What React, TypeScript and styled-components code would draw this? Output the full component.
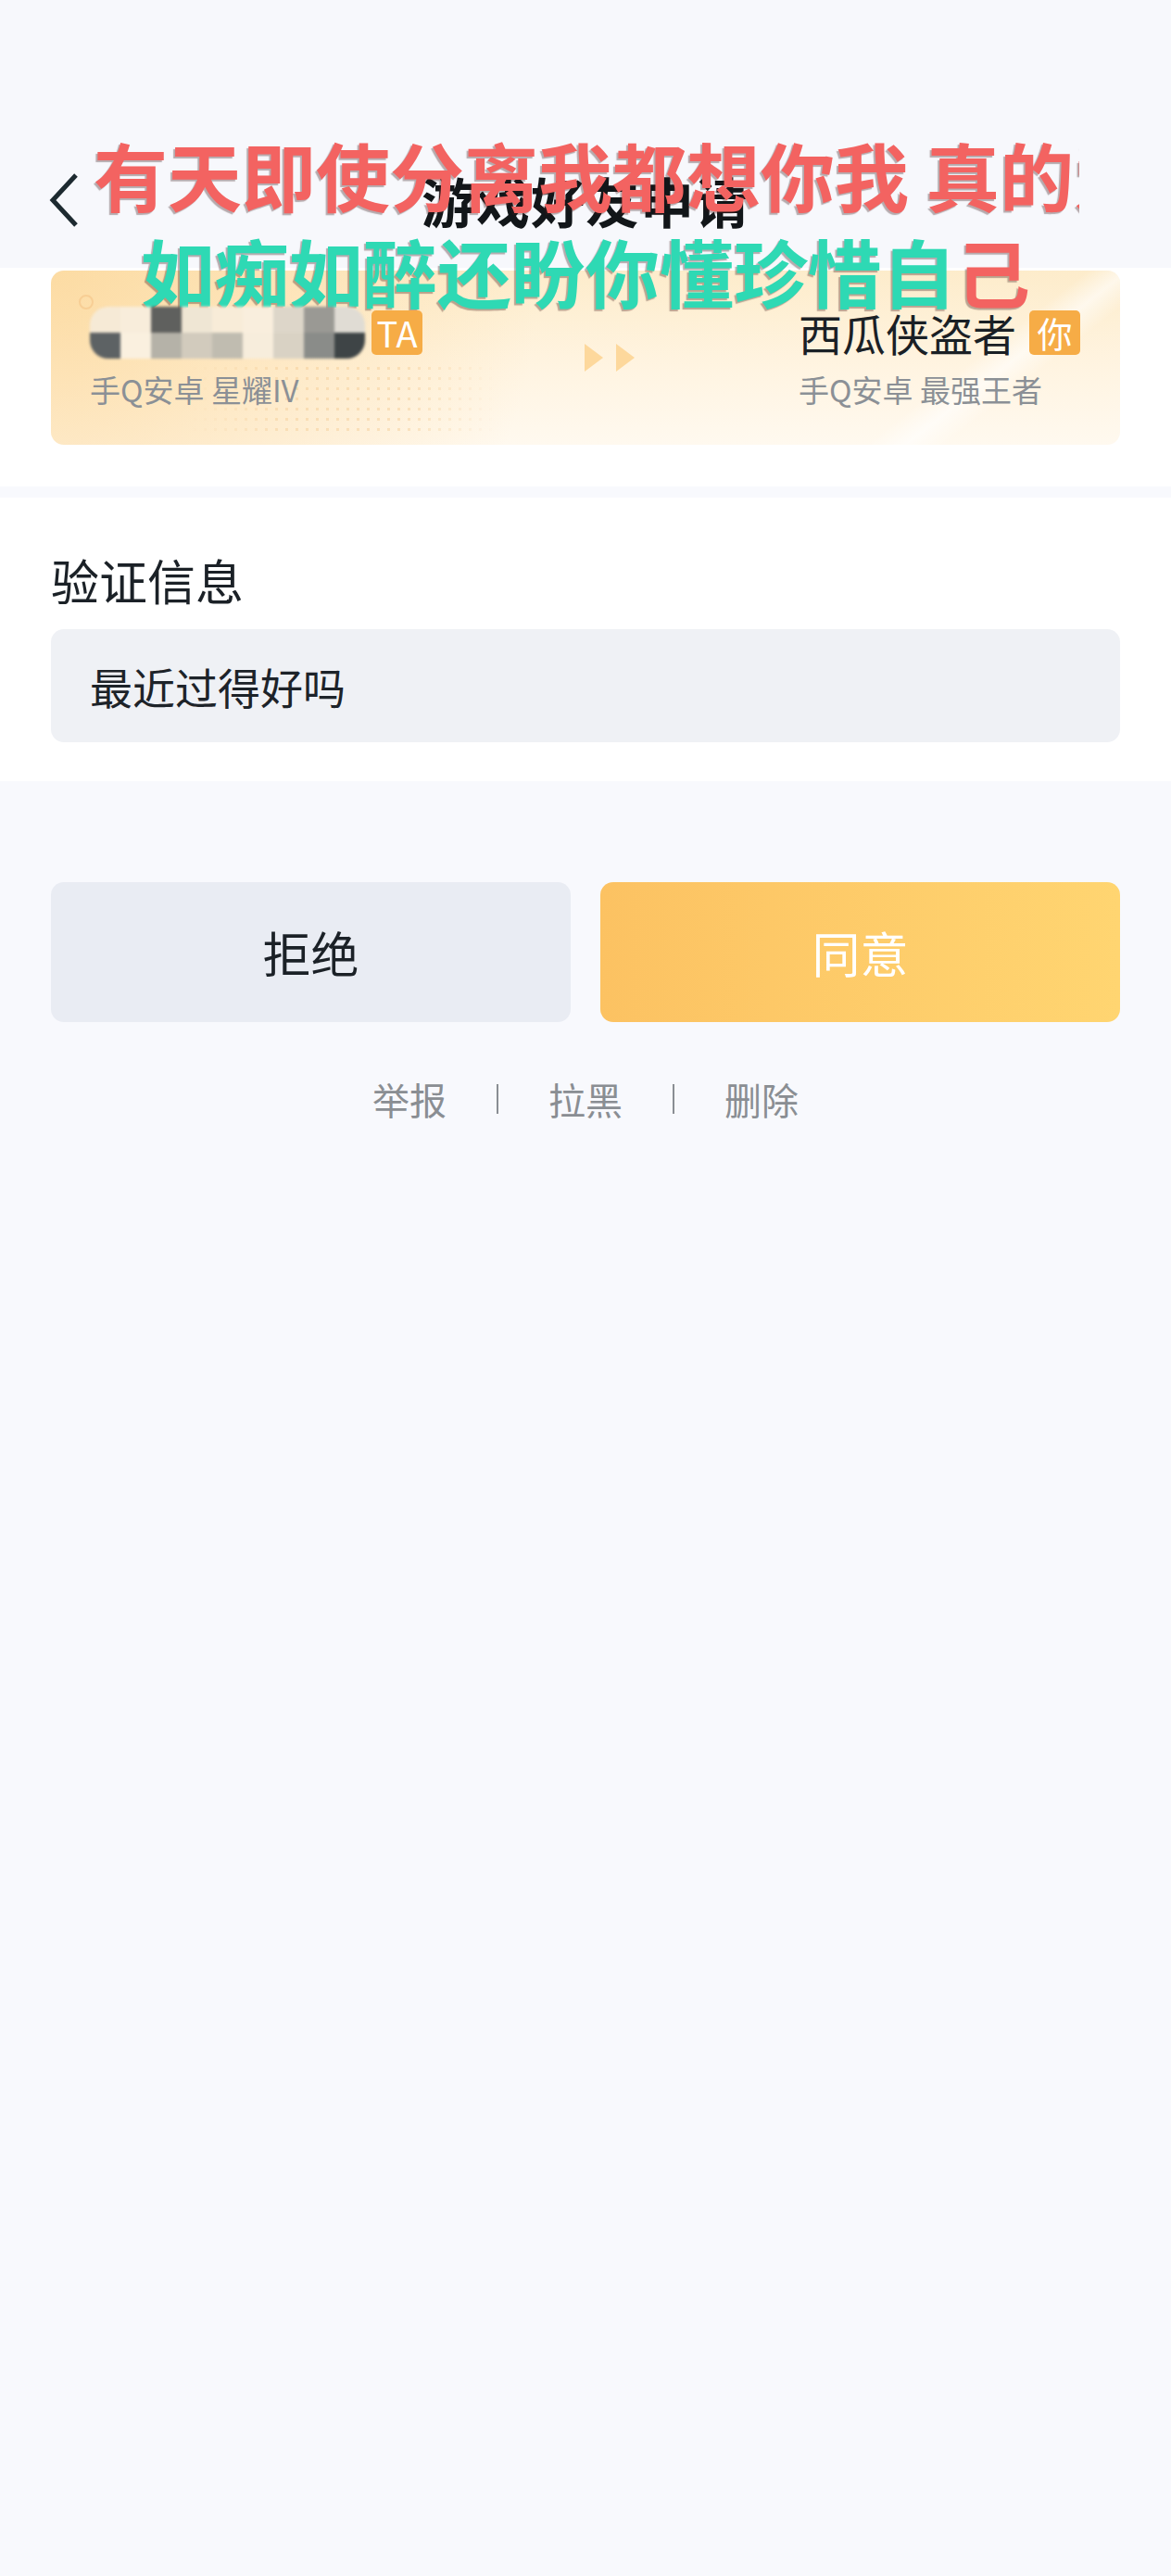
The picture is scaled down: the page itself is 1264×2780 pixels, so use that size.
import React, {FC} from "react";
import styled, {createGlobalStyle} from "styled-components";

const GlobalStyle = createGlobalStyle`
  html, body {
    margin: 0;
    padding: 0;
    background: #f7f8fc;
    font-family: "Noto Sans CJK SC", "Noto Sans", sans-serif;
  }
`;

const Page = styled.div`
  position: relative;
  min-height: 2780px;
  background: #f8f9fd;
  overflow: hidden;
`;

const Header = styled.div`
  height: 289px;
  padding-top: 171px;
  box-sizing: border-box;
  background: #f7f8fc;
`;

const NavRow = styled.div`
  display: grid;
  grid-template-columns: 1fr auto 1fr;
  align-items: center;
  height: 90px;
  padding: 0 53px;
`;

const BackButton = styled.div`
  display: flex;
  align-items: center;
  width: 40px;
  height: 60px;
`;

const Title = styled.div`
  font-size: 58px;
  font-weight: 700;
  color: #121619;
  line-height: 90px;
  letter-spacing: 1px;
`;

/* lyric overlay floating above the page */
const Lyrics = styled.div`
  position: absolute;
  left: 0;
  right: 0;
  top: 135px;
  pointer-events: none;
`;

const LyricLine = styled.div<{ $clip?: boolean }>`
  font-size: 80px;
  font-weight: 700;
  line-height: 104px;
  white-space: nowrap;
  text-shadow: -2px 2px 1px rgba(60, 25, 25, 0.35);
  ${p => p.$clip ? `
    margin-left: 101px;
    width: 1064px;
    overflow: hidden;
  ` : `
    text-align: center;
  `}
`;

const Red = styled.span`
  color: #f36361;
`;

const Teal = styled.span`
  color: #2ed9b4;
`;

const Section = styled.div<{ $top: number; $bottom: number }>`
  background: #ffffff;
  padding: ${p => p.$top}px 55px ${p => p.$bottom}px;
`;

const Gap = styled.div`
  height: 12px;
`;

const Card = styled.div`
  position: relative;
  display: flex;
  align-items: center;
  height: 188px;
  padding: 0 41px 0 42px;
  border-radius: 14px;
  overflow: hidden;
  background:
    radial-gradient(circle at 0% 0%, rgba(252, 214, 150, 0.75) 0%, rgba(252, 214, 150, 0) 45%),
    linear-gradient(180deg, #fdeccb 0%, #fff4e1 55%, #fff9ef 100%);

  &::before {
    content: "";
    position: absolute;
    left: 150px;
    top: 100px;
    width: 330px;
    height: 80px;
    background-image: radial-gradient(circle, rgba(245, 205, 150, 0.5) 1.4px, transparent 1.6px);
    background-size: 11px 11px;
    -webkit-mask-image: linear-gradient(90deg, transparent 0%, #000 30%, #000 70%, transparent 100%);
  }

  &::after {
    content: "";
    position: absolute;
    right: -40px;
    bottom: -60px;
    width: 420px;
    height: 200px;
    background: linear-gradient(160deg, rgba(255, 255, 255, 0) 40%, rgba(255, 255, 255, 0.6) 48%, rgba(255, 255, 255, 0) 56%);
    transform: rotate(-18deg);
  }
`;

const Ring = styled.div`
  position: absolute;
  left: 30px;
  top: 26px;
  width: 12px;
  height: 12px;
  border: 2px solid rgba(245, 200, 140, 0.7);
  border-radius: 50%;
`;

const Player = styled.div<{ $width?: number }>`
  position: relative;
  z-index: 1;
  display: flex;
  flex-direction: column;
  gap: 14px;
  ${p => p.$width ? `width: ${p.$width}px;` : ``}
`;

const NameRow = styled.div<{ $gap: number }>`
  display: flex;
  align-items: center;
  gap: ${p => p.$gap}px;
  height: 54px;
`;

const Name = styled.div`
  font-size: 47px;
  color: #1a2025;
  line-height: 54px;
`;

const Badge = styled.div`
  display: flex;
  align-items: center;
  justify-content: center;
  width: 55px;
  height: 48px;
  border-radius: 5px;
  background: #f6ac46;
  color: #ffffff;
  font-size: 38px;
  line-height: 48px;
`;

const Platform = styled.div`
  font-size: 33px;
  color: #8b9096;
  line-height: 40px;
`;

const Mosaic = styled.div`
  display: grid;
  grid-template-columns: repeat(9, 33px);
  grid-template-rows: repeat(2, 28px);
  filter: blur(1.5px);
`;

const Cell = styled.div<{ $color: string; $round?: string }>`
  background: ${p => p.$color};
  ${p => p.$round ? `border-radius: ${p.$round};` : ``}
`;

const Arrows = styled.div`
  position: relative;
  z-index: 1;
  display: flex;
  gap: 14px;
  width: 55px;
  margin-right: auto;
`;

const RightPlayer = styled(Player)`
  width: 306px;
`;

const Label = styled.div`
  font-size: 52px;
  color: #1b2127;
  line-height: 60px;
  margin-bottom: 23px;
`;

const MessageBox = styled.div`
  display: flex;
  align-items: center;
  height: 122px;
  padding: 0 42px;
  border-radius: 14px;
  background: #eff1f5;
  font-size: 46px;
  color: #1d2329;
`;

const ButtonRow = styled.div`
  display: flex;
  gap: 32px;
  padding: 0 55px;
  margin-top: 109px;
`;

const ActionButton = styled.div<{ $primary?: boolean }>`
  flex: 1;
  display: flex;
  align-items: center;
  justify-content: center;
  height: 151px;
  border-radius: 14px;
  font-size: 52px;
  color: ${p => p.$primary ? "#ffffff" : "#1b2127"};
  background: ${p => p.$primary ? "linear-gradient(90deg, #fcc262 0%, #ffd571 100%)" : "#e9ecf3"};
`;

const LinkRow = styled.div`
  display: flex;
  justify-content: center;
  align-items: center;
  margin-top: 58px;
  font-size: 40px;
  line-height: 50px;
  color: #8a8e93;
`;

const Sep = styled.span`
  display: inline-block;
  width: 2px;
  height: 32px;
  margin: 0 54px;
  background: #8a8e93;
`;

const mosaicCells: { color: string; round?: string }[] = [
  {color: "#f6ead6", round: "20px 0 0 0"}, {color: "#f8eddb"}, {color: "#5f605e"}, {color: "#efe6d4"},
  {color: "#f8ecd8"}, {color: "#f9eedd"}, {color: "#ddd6c9"}, {color: "#9a9994"}, {color: "#e0dcd4", round: "0 20px 0 0"},
  {color: "#5d6264", round: "0 0 0 20px"}, {color: "#faf0df"}, {color: "#b5b2a8"}, {color: "#d2cbbd"},
  {color: "#c0bcb0"}, {color: "#f7eddc"}, {color: "#d9d2c4"}, {color: "#8a8c89"}, {color: "#3e4446", round: "0 0 20px 0"},
];

const Triangle: FC = () => (
  <svg width="20" height="30" viewBox="0 0 20 30">
    <polygon points="0,0 20,15 0,30" fill="#fdd89c"/>
  </svg>
);

export default function App() {
  return (
    <Page>
      <GlobalStyle/>
      <Header>
        <NavRow>
          <BackButton>
            <svg width="32" height="58" viewBox="0 0 32 58">
              <polyline points="29,2 4,29 29,56" fill="none" stroke="#1d2a30" strokeWidth="5"/>
            </svg>
          </BackButton>
          <Title>游戏好友申请</Title>
          <div/>
        </NavRow>
      </Header>

      <Section $top={3} $bottom={45}>
        <Card>
          <Ring/>
          <Player $width={534}>
            <NameRow $gap={7}>
              <Mosaic>
                {mosaicCells.map((c, i) => <Cell key={i} $color={c.color} $round={c.round}/>)}
              </Mosaic>
              <Badge>TA</Badge>
            </NameRow>
            <Platform>手Q安卓 星耀IV</Platform>
          </Player>
          <Arrows>
            <Triangle/>
            <Triangle/>
          </Arrows>
          <RightPlayer>
            <NameRow $gap={14}>
              <Name>西瓜侠盗者</Name>
              <Badge>你</Badge>
            </NameRow>
            <Platform>手Q安卓 最强王者</Platform>
          </RightPlayer>
        </Card>
      </Section>
      <Gap/>
      <Section $top={59} $bottom={42}>
        <Label>验证信息</Label>
        <MessageBox>最近过得好吗</MessageBox>
      </Section>

      <ButtonRow>
        <ActionButton>拒绝</ActionButton>
        <ActionButton $primary>同意</ActionButton>
      </ButtonRow>

      <LinkRow>
        <span>举报</span>
        <Sep/>
        <span>拉黑</span>
        <Sep/>
        <span>删除</span>
      </LinkRow>

      <Lyrics>
        <LyricLine $clip>
          <Red>有天即使分离我都想你我 真的爱</Red>
        </LyricLine>
        <LyricLine>
          <Teal>如痴如醉还盼你懂珍惜自</Teal><Red>己</Red>
        </LyricLine>
      </Lyrics>
    </Page>
  );
}
